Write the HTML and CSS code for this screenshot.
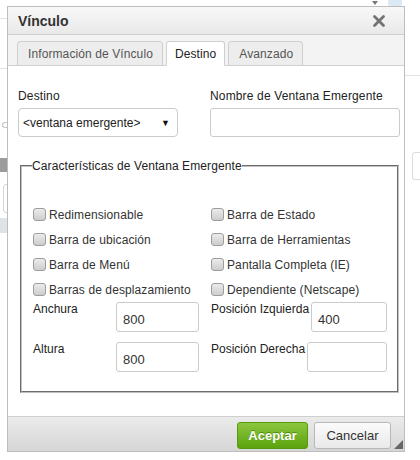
FILE: index.html
```html
<!DOCTYPE html>
<html lang="es">
<head>
<meta charset="utf-8">
<title>Vínculo</title>
<link rel="stylesheet" href="styles.css">
</head>
<body>
<div class="page">
  <div class="bg-line bl1"></div>
  <div class="bg-line bl2"></div>
  <div class="bg-line bl3"></div>
  <div class="bg-glyph"></div>
  <div class="bg-block"></div>
  <div class="bg-box"></div>
  <div class="bg-bar"></div>
  <div class="bg-arrow"></div>
  <div class="bg-help"></div>
  <div class="bg-rbox"></div>
</div>

<div class="dialog">
  <div class="titlebar">
    <span class="title">Vínculo</span>
    <svg class="close" width="14" height="14" viewBox="0 0 14 14"><path d="M2.5 2.5 L11.5 11.5 M11.5 2.5 L2.5 11.5" stroke="#727272" stroke-width="2.8" stroke-linecap="round"/></svg>
  </div>
  <div class="tabs">
    <div class="tab">Información de Vínculo</div>
    <div class="tab active">Destino</div>
    <div class="tab">Avanzado</div>
  </div>
  <div class="body">
    <div class="toprow">
      <div class="field">
        <div class="label">Destino</div>
        <div class="select"><span>&lt;ventana emergente&gt;</span><span class="arrow">▼</span></div>
      </div>
      <div class="field">
        <div class="label">Nombre de Ventana Emergente</div>
        <div class="input wide"></div>
      </div>
    </div>
    <fieldset class="group">
      <legend>Características de Ventana Emergente</legend>
      <div class="checks">
        <div class="check"><span class="box"></span>Redimensionable</div>
        <div class="check"><span class="box"></span>Barra de Estado</div>
        <div class="check"><span class="box"></span>Barra de ubicación</div>
        <div class="check"><span class="box"></span>Barra de Herramientas</div>
        <div class="check"><span class="box"></span>Barra de Menú</div>
        <div class="check"><span class="box"></span>Pantalla Completa (IE)</div>
        <div class="check"><span class="box"></span>Barras de desplazamiento</div>
        <div class="check"><span class="box"></span>Dependiente (Netscape)</div>
      </div>
      <div class="dims">
        <div class="dim left"><span class="dlabel">Anchura</span><div class="input num">800</div></div>
        <div class="dim right"><span class="dlabel">Posición Izquierda</span><div class="input num">400</div></div>
        <div class="dim left"><span class="dlabel">Altura</span><div class="input num">800</div></div>
        <div class="dim right"><span class="dlabel">Posición Derecha</span><div class="input num"></div></div>
      </div>
    </fieldset>
  </div>
  <div class="footer">
    <button class="btn ok">Aceptar</button>
    <button class="btn cancel">Cancelar</button>
    <svg class="resize" width="9" height="9" viewBox="0 0 9 9"><path d="M9 0 L9 9 L0 9 Z" fill="#666"/></svg>
  </div>
</div>
</body>
</html>
```

FILE: styles.css
```css
* { box-sizing: border-box; }
html, body { margin: 0; padding: 0; }
body {
  width: 420px;
  height: 460px;
  overflow: hidden;
  background: #fff;
  font-family: "Liberation Sans", Arial, sans-serif;
  font-size: 12px;
  color: #222;
  position: relative;
}

/* background page (behind the dialog) */
.page { position: absolute; inset: 0; }
.bg-line { position: absolute; height: 1px; background: #e2e2e2; }
.bl1 { left: 0; top: 18px; width: 10px; }
.bl2 { left: 0; top: 68px; width: 10px; }
.bl3 { left: 400px; top: 75px; width: 20px; }
.bg-glyph { position: absolute; left: 2px; top: 122px; width: 5px; height: 6px; border: 1px solid #c4c4c4; border-right: none; border-radius: 3px 0 0 3px; }
.bg-block { position: absolute; left: 0; top: 158px; width: 8px; height: 14px; background: #9c9c9c; }
.bg-box { position: absolute; left: 3px; top: 184px; width: 20px; height: 29px; border: 1px solid #d6d6d6; border-radius: 3px; }
.bg-bar { position: absolute; left: 0; top: 218px; width: 10px; height: 15px; background: #dfe3e8; }
.bg-arrow { position: absolute; left: 372px; top: 1px; width: 0; height: 0; border-left: 3px solid transparent; border-right: 3px solid transparent; border-top: 4px solid #777; }
.bg-help { position: absolute; left: 388px; top: 0; width: 14px; height: 6px; background: #dbe9f5; border-radius: 0 0 2px 2px; }
.bg-rbox { position: absolute; left: 412px; top: 152px; width: 20px; height: 28px; border: 1px solid #dcdcdc; border-radius: 3px; }

/* dialog */
.dialog {
  position: absolute;
  left: 7px;
  top: 6px;
  width: 398px;
  height: 446px;
  border: 1px solid #bdbdbd;
  background: #fff;
  display: flex;
  flex-direction: column;
}
.titlebar {
  height: 28px;
  flex: none;
  display: flex;
  align-items: center;
  justify-content: space-between;
  padding: 0 18px 0 10px;
  background: linear-gradient(#f8f8f8, #e9e9e9);
  border-bottom: 1px solid #cfcfcf;
}
.title { font-weight: bold; font-size: 14px; color: #333; }
.close { display: block; }

.tabs {
  height: 31px;
  flex: none;
  display: flex;
  align-items: flex-end;
  gap: 3px;
  padding-left: 9px;
  background: #f3f3f3;
  border-bottom: 1px solid #d0d0d0;
}
.tab {
  height: 25px;
  margin-bottom: -1px;
  padding: 0 9px 0 10px;
  display: flex;
  align-items: center;
  border: 1px solid #cfcfcf;
  border-radius: 3px 3px 0 0;
  background: #ededed;
  color: #555;
  letter-spacing: 0.1px;
}
.tab.active {
  background: #fff;
  color: #222;
  border-bottom-color: #fff;
  padding: 0 8px;
}

.body {
  flex: 1;
  padding: 22px 5px 0 10px;
}
.toprow {
  display: grid;
  grid-template-columns: 160px 190px;
  column-gap: 32px;
}
.label { line-height: 16px; color: #222; letter-spacing: 0.15px; }
.select {
  margin-top: 4px;
  height: 29px;
  border: 1px solid #cbcbcb;
  border-radius: 4px;
  display: flex;
  align-items: center;
  justify-content: space-between;
  padding: 0 7px 0 4px;
  color: #222;
}
.arrow { font-size: 9px; color: #111; }
.input {
  border: 1px solid #cbcbcb;
  border-radius: 3px;
  background: #fff;
}
.input.wide { margin-top: 4px; height: 29px; }

.group {
  margin: 21px 0 0 2px;
  padding: 0 0 19px 11px;
  border: 2px groove #c0c0c0;
  min-width: 0;
}
.group legend {
  padding: 0;
  margin-left: -1px;
  line-height: 16px;
  color: #222;
  letter-spacing: 0.1px;
}
.checks {
  margin-top: 28px;
  display: grid;
  grid-template-columns: 178px 1fr;
  grid-auto-rows: 25px;
}
.check {
  display: flex;
  align-items: center;
  color: #333;
  letter-spacing: 0.1px;
}
.box {
  width: 13px;
  height: 13px;
  margin-right: 3px;
  border: 1px solid #9d9d9d;
  border-radius: 3px;
  background: linear-gradient(#ebebeb, #cdcdcd);
  flex: none;
}
.dims {
  display: grid;
  grid-template-columns: 178px 176px;
  row-gap: 10px;
}
.dim { display: flex; align-items: flex-start; height: 30px; }
.dlabel { line-height: 15px; color: #222; white-space: nowrap; }
.dim.left .dlabel { width: 83px; }
.dim.left .input { width: 83px; }
.dim.right { gap: 2px; }
.dim.right .input { flex: 1; }
.input.num {
  height: 30px;
  padding: 9px 0 0 6px;
  font-size: 13px;
  line-height: 15px;
  color: #333;
}

.footer {
  height: 35px;
  flex: none;
  position: relative;
  display: flex;
  justify-content: flex-end;
  align-items: flex-start;
  gap: 6px;
  padding: 5px 13px 0 0;
  border-top: 1px solid #cfcfcf;
  background: linear-gradient(#ebebeb, #d6d6d6);
}
.btn {
  height: 27px;
  font-family: "Liberation Sans", Arial, sans-serif;
  font-size: 13px;
  border-radius: 3px;
  padding: 0;
  cursor: pointer;
}
.btn.ok {
  width: 71px;
  color: #fff;
  font-weight: bold;
  background: linear-gradient(#8dc63f, #5ba20e);
  border: 1px solid #579c0e;
  text-shadow: 0 -1px 0 #4a8a09;
}
.btn.cancel {
  width: 77px;
  color: #333;
  background: linear-gradient(#fbfbfb, #e9e9e9);
  border: 1px solid #b8b8b8;
}
.resize { position: absolute; right: 1px; bottom: 2px; }
```
